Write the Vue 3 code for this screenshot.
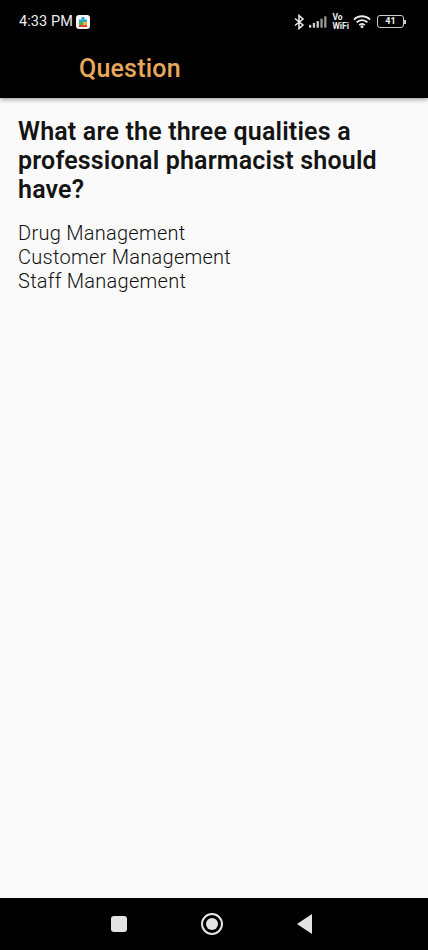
<script setup>
const answers = ['Drug Management', 'Customer Management', 'Staff Management'];
</script>

<template>
  <div class="page">
    <header class="top">
      <div class="status">
        <div class="status-left">
          <span class="time">4:33 PM</span>
          <svg class="play" width="14" height="14" viewBox="0 0 14 14">
            <rect width="14" height="14" rx="3" fill="#f4f4f4" />
            <path d="M5.500 2h3v2.500H11V7H3V4.500h2.500z" fill="#2fa8c9" />
            <path d="M3 7h4v3H3z" fill="#3db25b" />
            <path d="M7 7h4v3H7z" fill="#f2b632" />
            <path d="M3 10h8v2H3z" fill="#e2453c" />
          </svg>
        </div>
        <div class="status-right">
          <svg width="11" height="16" viewBox="0 0 11 16" fill="none" stroke="#eee" stroke-width="1.500">
            <path d="M1 4.500l8 6.500-4 3.500V1.500l4 3.500-8 6.500" />
          </svg>
          <svg width="19" height="12" viewBox="0 0 20 12" fill="#ccc">
            <rect x="0" y="9" width="2.400" height="3" />
            <rect x="4" y="7" width="2.400" height="5" />
            <rect x="8" y="5" width="2.400" height="7" />
            <rect x="12" y="2.500" width="2.400" height="9.500" fill="#999" />
            <rect x="16" y="0" width="2.400" height="12" fill="#999" />
          </svg>
          <span class="vowifi">Vo<br />WiFi</span>
          <svg width="18" height="13" viewBox="0 0 20 14" fill="none" stroke="#eee" stroke-width="2">
            <path d="M1 5a12.500 12.500 0 0 1 18 0" />
            <path d="M4 8a8.300 8.300 0 0 1 12 0" />
            <path d="M7 11a4 4 0 0 1 6 0" />
            <circle cx="10" cy="12.800" r="0.600" fill="#eee" />
          </svg>
          <div class="battery">
            <div class="battery-body">41</div>
            <div class="battery-tip"></div>
          </div>
        </div>
      </div>
      <div class="toolbar">Question</div>
    </header>

    <main class="content">
      <h1>What are the three qualities a professional pharmacist should have?</h1>
      <p v-for="item in answers" :key="item">{{ item }}</p>
    </main>

    <footer class="nav">
      <span class="nav-square"></span>
      <span class="nav-circle"><span class="nav-dot"></span></span>
      <span class="nav-back"></span>
    </footer>
  </div>
</template>

<style>
html,
body {
  margin: 0;
  background: #fafafa;
}
</style>

<style scoped>
.page {
  width: 428px;
  height: 950px;
  display: flex;
  flex-direction: column;
  background: #fafafa;
  font-family: Roboto, "Liberation Sans", sans-serif;
  overflow: hidden;
}

.top {
  height: 98px;
  flex: none;
  background: #000;
  box-shadow: 0 1px 5px rgba(0, 0, 0, 0.45);
  z-index: 1;
}

.status {
  height: 43px;
  padding: 0 22px 0 19px;
  display: flex;
  justify-content: space-between;
  align-items: center;
}

.status-left {
  display: flex;
  align-items: center;
  gap: 3px;
}

.time {
  color: #eee;
  font-size: 14.5px;
  font-weight: 400;
  letter-spacing: 0.1px;
}

.status-right {
  display: flex;
  align-items: center;
  gap: 4px;
}

.vowifi {
  color: #eee;
  font-size: 8.5px;
  line-height: 9px;
  font-weight: 700;
}

.battery {
  display: flex;
  align-items: center;
  margin-left: 2px;
}

.battery-body {
  width: 25px;
  height: 11px;
  border: 1px solid #ccc;
  border-radius: 3px;
  color: #eee;
  font-size: 9px;
  line-height: 11px;
  font-weight: 700;
  text-align: center;
}

.battery-tip {
  width: 2px;
  height: 4px;
  background: #ccc;
}

.toolbar {
  padding-left: 79px;
  color: #e8a95c;
  font-size: 25px;
  line-height: 50px;
  font-weight: 500;
  letter-spacing: 0.2px;
  padding-top: 1px;
}

.content {
  flex: 1;
  padding: 19px 18px 0;
}

h1 {
  margin: 0 0 17px;
  color: #141414;
  font-size: 25px;
  line-height: 29px;
  font-weight: 600;
  letter-spacing: 0.18px;
}

p {
  margin: 0;
  color: #111;
  font-size: 20px;
  line-height: 24px;
  font-weight: 300;
  letter-spacing: 0.27px;
}

.nav {
  height: 52px;
  flex: none;
  background: #000;
  display: flex;
  align-items: center;
}

.nav-square {
  width: 16px;
  height: 16px;
  margin-left: 111px;
  background: #e4e4e4;
  border-radius: 3px;
}

.nav-circle {
  width: 22px;
  height: 22px;
  margin-left: 74px;
  border: 2px solid #e4e4e4;
  border-radius: 50%;
  display: flex;
  align-items: center;
  justify-content: center;
  box-sizing: border-box;
}

.nav-dot {
  width: 12px;
  height: 12px;
  background: #e4e4e4;
  border-radius: 50%;
}

.nav-back {
  margin-left: 74px;
  width: 0;
  height: 0;
  border-top: 10px solid transparent;
  border-bottom: 10px solid transparent;
  border-right: 15px solid #e4e4e4;
}
</style>
